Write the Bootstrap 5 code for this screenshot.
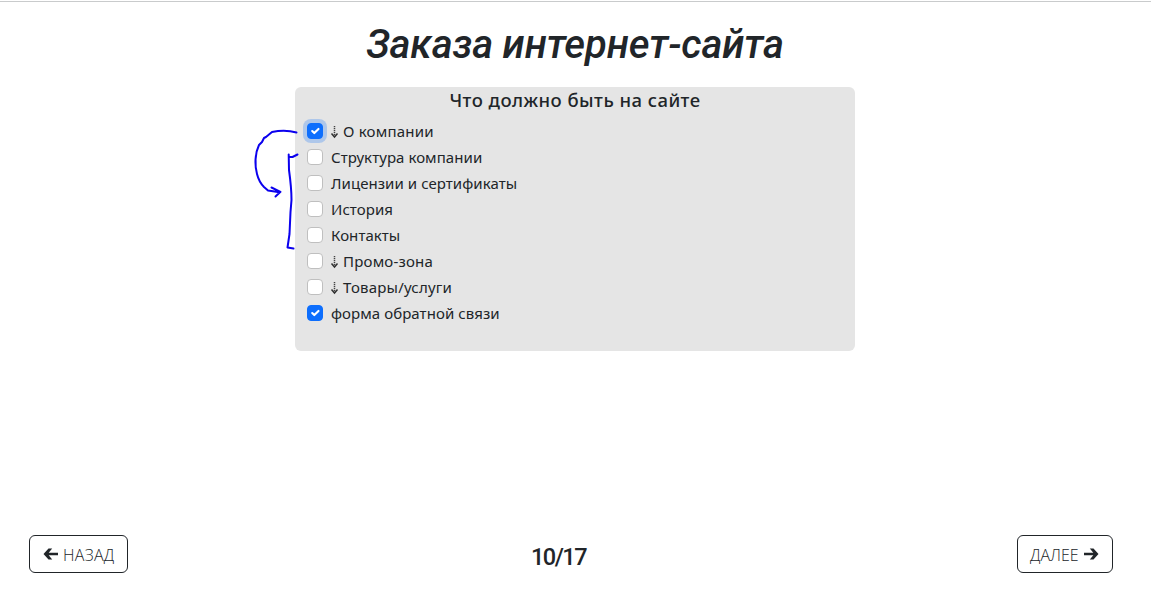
<!DOCTYPE html>
<html lang="ru">
<head>
<meta charset="utf-8">
<meta name="viewport" content="width=device-width, initial-scale=1">
<title>Заказа интернет-сайта</title>
<link rel="stylesheet" href="https://cdn.jsdelivr.net/npm/bootstrap@5.3.0/dist/css/bootstrap.min.css">
<style>
body{font-family:"Noto Sans","Open Sans",sans-serif;color:#212529;border-top:1px solid #c9cbcc;margin-top:1px;height:611px;overflow:hidden}
.page-title{font:italic 500 40px/48px Roboto,sans-serif;letter-spacing:-.14px;padding-top:19px;margin-bottom:18px;white-space:nowrap}
.page-title,.survey-wrap{padding-right:1px}
.survey{width:560px;height:264px;background:#e5e5e5;border-radius:6px}
.survey h2{font-size:18.500px;font-weight:500;letter-spacing:.45px;line-height:24px;margin:0 0 7px;padding-top:1px}
.form-check{min-height:24px;margin-bottom:2px}
.form-check-label{font-size:15px;letter-spacing:.06px;line-height:24px;white-space:nowrap}
.form-check-input:not(:checked){border-color:#bfbfbf}
.form-check-input.active-box{box-shadow:0 0 0 4px rgba(13,110,253,.25)}
.down-arrow{width:9px;height:14px;margin-right:4px;margin-left:-1px;vertical-align:-2px}
.down-arrow+span{letter-spacing:.2px}
.pen{left:-45px;top:38px}
.step-nav{margin-top:184px;padding:0 38px 0 29px}
.step-nav .btn{font:300 16px/24px "Open Sans",sans-serif;height:38px;padding:7px 12px 5px}
.step-nav .btn-back{width:99px;letter-spacing:.3px}
.step-nav .btn-next{width:96px}
.step-nav svg{width:17px;height:16px;flex:none}
.counter{font:500 23.500px/29px Roboto,sans-serif;letter-spacing:-1.500px;padding-top:6px;margin-right:28px}
</style>
</head>
<body>
<h1 class="page-title text-center">Заказа интернет-сайта</h1>
<div class="survey-wrap d-flex justify-content-center">
<main class="survey position-relative">
  <h2 class="text-center">Что должно быть на сайте</h2>
  <div class="ps-2 ms-1" id="options"></div>
  <svg class="pen position-absolute" width="52" height="126" viewBox="250 125 52 126" fill="none" stroke="#0b00ee" stroke-width="2" stroke-linecap="round" stroke-linejoin="round" aria-hidden="true">
    <path d="M296.500 132.500C289 130.500 280 130.500 272 132L266 137 264 138 262 142 259 145C255 153 254.500 165 257 174Q259 182 264 187L268 190.500 279.500 192.300M271.500 187.500L280.500 191.800 275.500 196.500"/>
    <path d="M297.500 154.500L292.500 157 289 156.800M288.700 154.500L289 170Q291.500 188 291.500 200L290.500 212 289.500 234 287.500 247.500 293.500 248.500"/>
  </svg>
</main>
</div>
<div class="step-nav d-flex justify-content-between align-items-center">
  <button class="btn btn-outline-dark btn-back d-flex align-items-center"><svg class="me-1" viewBox="0 0 17 16" aria-hidden="true"><path d="M6.500 1.500H10.200L6.700 5.700H16V8.300H6.700L10.200 12.500H6.500L1.500 7z" fill="currentColor"/></svg><span>НАЗАД</span></button>
  <span class="counter">10/17</span>
  <button class="btn btn-outline-dark btn-next d-flex align-items-center"><span>ДАЛЕЕ</span><svg class="ms-1" viewBox="0 0 17 16" aria-hidden="true"><path d="M10.500 1.500H6.800L10.300 5.700H1V8.300H10.300L6.800 12.500H10.500L15.500 7z" fill="currentColor"/></svg></button>
</div>
<script src="https://cdn.jsdelivr.net/npm/bootstrap@5.3.0/dist/js/bootstrap.bundle.min.js"></script>
<script>
const arrow='<svg class="down-arrow" viewBox="0 0 9 14" aria-hidden="true"><path d="M4.500 1v11" stroke="#444" stroke-width="1.500" stroke-dasharray="1.300 .7"/><path d="M1.500 8.500l3 3.500 3-3.500" fill="none" stroke="#333" stroke-width="1.500"/></svg>';
const items=[["О компании",1,1,1],["Структура компании"],["Лицензии и сертификаты"],["История"],["Контакты"],["Промо-зона",1],["Товары/услуги",1],["форма обратной связи",0,1]];
document.getElementById("options").innerHTML=items.map(([t,down,on,focus],i)=>`<div class="form-check"><input class="form-check-input${focus?' active-box':''}" type="checkbox" id="o${i}"${on?' checked':''}><label class="form-check-label" for="o${i}">${down?arrow:''}<span>${t}</span></label></div>`).join("");
</script>
</body>
</html>
